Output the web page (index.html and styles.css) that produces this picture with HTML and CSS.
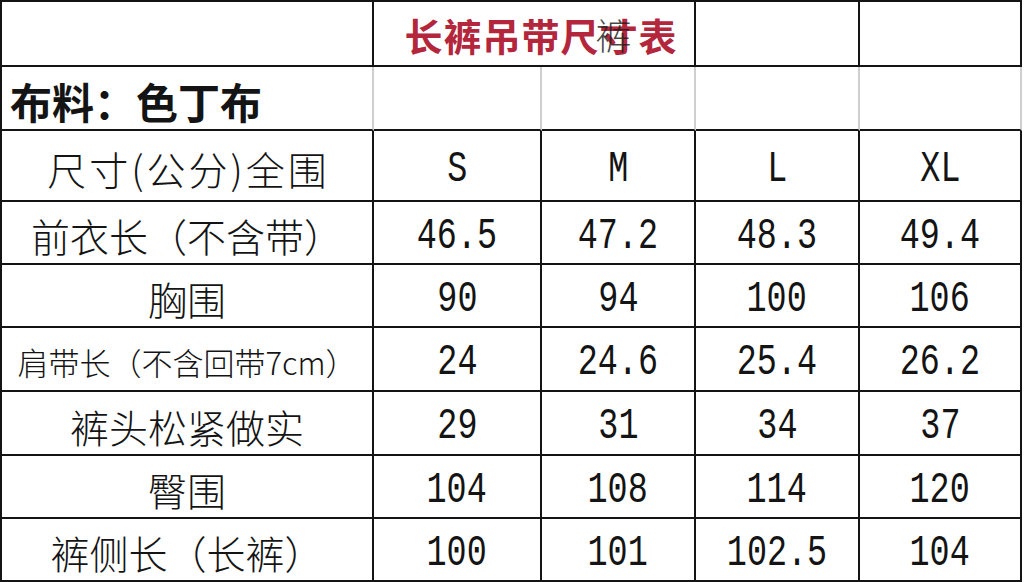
FILE: index.html
```html
<!DOCTYPE html>
<html lang="zh-CN">
<head>
<meta charset="utf-8">
<title>长裤吊带尺寸表</title>
<link rel="stylesheet" href="styles.css">
</head>
<body>
<div class="sheet">
  <div class="cell head"></div>
  <div class="cell head title-cell"><span class="title">长裤吊带尺<span class="glitch">寸<span class="over">裤</span></span>表</span></div>
  <div class="cell head"></div>
  <div class="cell head"></div>

  <div class="cell faint fabric">布料：色丁布</div>
  <div class="cell faint"></div>
  <div class="cell faint"></div>
  <div class="cell faint"></div>
  <div class="cell faint"></div>

  <div class="cell label spaced">尺寸(公分)全围</div>
  <div class="cell num"><span>S</span></div>
  <div class="cell num"><span>M</span></div>
  <div class="cell num"><span>L</span></div>
  <div class="cell num"><span>XL</span></div>

  <div class="cell label">前衣长（不含带）</div>
  <div class="cell num"><span>46.5</span></div>
  <div class="cell num"><span>47.2</span></div>
  <div class="cell num"><span>48.3</span></div>
  <div class="cell num"><span>49.4</span></div>

  <div class="cell label">胸围</div>
  <div class="cell num"><span>90</span></div>
  <div class="cell num"><span>94</span></div>
  <div class="cell num"><span>100</span></div>
  <div class="cell num"><span>106</span></div>

  <div class="cell label small">肩带长（不含回带7cm）</div>
  <div class="cell num"><span>24</span></div>
  <div class="cell num"><span>24.6</span></div>
  <div class="cell num"><span>25.4</span></div>
  <div class="cell num"><span>26.2</span></div>

  <div class="cell label">裤头松紧做实</div>
  <div class="cell num"><span>29</span></div>
  <div class="cell num"><span>31</span></div>
  <div class="cell num"><span>34</span></div>
  <div class="cell num"><span>37</span></div>

  <div class="cell label">臀围</div>
  <div class="cell num"><span>104</span></div>
  <div class="cell num"><span>108</span></div>
  <div class="cell num"><span>114</span></div>
  <div class="cell num"><span>120</span></div>

  <div class="cell label">裤侧长（长裤）</div>
  <div class="cell num"><span>100</span></div>
  <div class="cell num"><span>101</span></div>
  <div class="cell num"><span>102.5</span></div>
  <div class="cell num"><span>104</span></div>
</div>
</body>
</html>
```
FILE: styles.css
```css
html, body {
  margin: 0;
  padding: 0;
  background: #ffffff;
}

body {
  width: 1024px;
  height: 582px;
  overflow: hidden;
  font-family: "Noto Sans CJK SC", "Noto Sans", sans-serif;
  color: #141414;
}

.sheet {
  display: grid;
  grid-template-columns: 372px 168px 154px 164px 162px;
  grid-template-rows: 65px 64px 71px 63px 63px 64px 64px 63px 63px;
  width: 1022px;
  box-sizing: border-box;
  border-left: 2px solid #141414;
  border-top: 2px solid #141414;
}

.cell {
  box-sizing: border-box;
  border-right: 2px solid #141414;
  border-bottom: 2px solid #141414;
  display: flex;
  align-items: center;
  justify-content: center;
  overflow: visible;
  min-width: 0;
}

.title-cell {
  grid-column: span 2;
  padding-left: 14px;
}

.title {
  font-family: "Noto Sans CJK SC", sans-serif;
  font-weight: 700;
  font-size: 38px;
  line-height: 1;
  color: #b3263c;
  letter-spacing: 1px;
  white-space: nowrap;
  padding-top: 2px;
}

.glitch {
  position: relative;
}

.over {
  position: absolute;
  left: -4px;
  top: 50%;
  transform: translateY(-50%);
  color: #1a1a1a;
  font-weight: 300;
  font-size: 36px;
  opacity: 0.8;
}

.faint {
  border-right-color: #cfcfcf;
}

.fabric {
  justify-content: flex-start;
  padding-left: 8px;
  font-weight: 700;
  font-size: 42px;
  line-height: 1;
  padding-top: 6px;
  white-space: nowrap;
}

.label {
  font-weight: 300;
  font-size: 39px;
  line-height: 1;
  white-space: nowrap;
  padding-top: 6px;
}

.label.spaced {
  letter-spacing: 3px;
  padding-left: 3px;
}

.label.small {
  font-size: 31px;
  padding-top: 4px;
}

.num {
  padding-top: 6px;
}

.num span {
  display: inline-block;
  font-family: "Liberation Mono", "DejaVu Sans Mono", monospace;
  font-size: 44px;
  line-height: 1;
  transform: scaleX(0.76);
  white-space: nowrap;
}
```
